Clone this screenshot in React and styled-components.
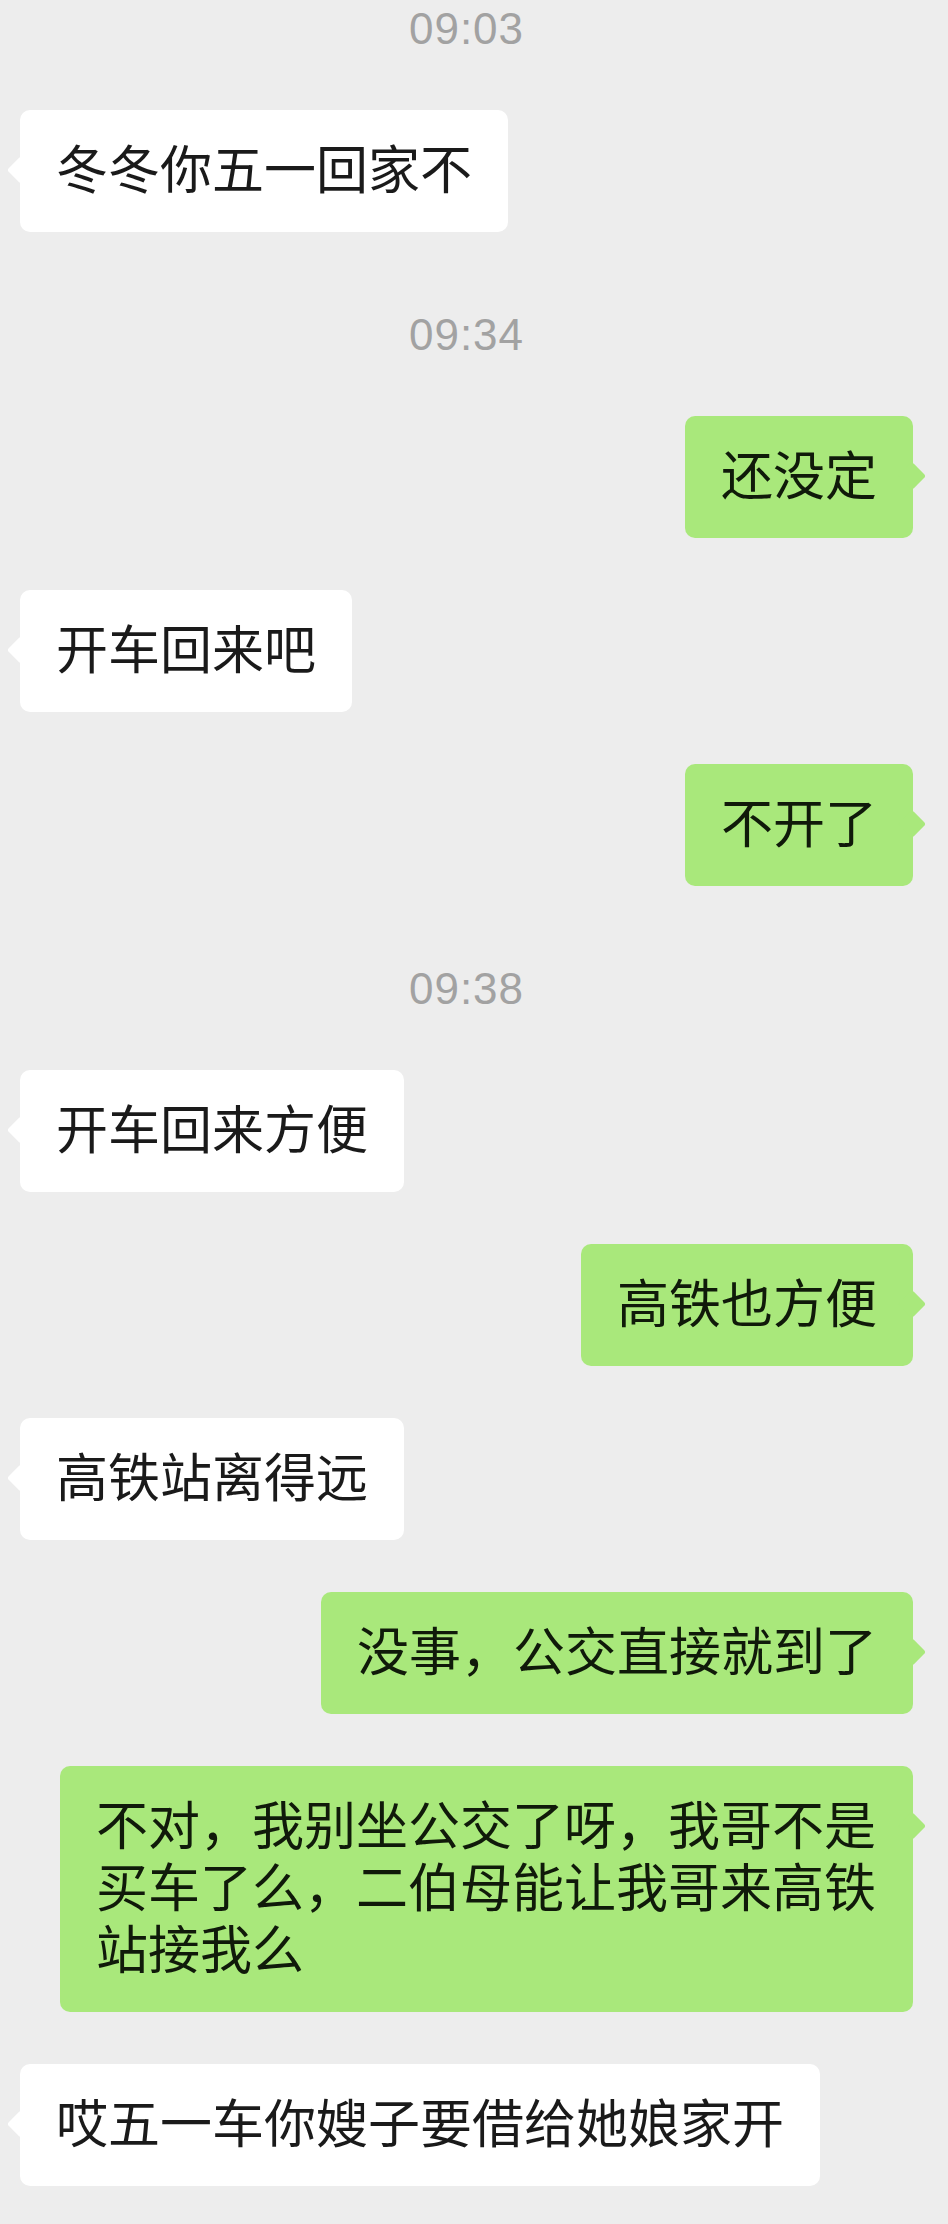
import React from "react";
import styled, { createGlobalStyle, css } from "styled-components";

const GlobalStyle = createGlobalStyle`
  html, body {
    margin: 0;
    padding: 0;
    background: #ededed;
  }
  body {
    font-family: "Noto Sans CJK SC", "Noto Sans", sans-serif;
  }
`;

const Page = styled.div`
  width: 948px;
  min-height: 2224px;
  box-sizing: border-box;
  background: #ededed;
  padding: 7px 35px 0 20px;
  display: flex;
  flex-direction: column;
  gap: 52px;
`;

const Time = styled.div`
  align-self: center;
  margin: 29px 0 7px 0;
  height: 44px;
  line-height: 44px;
  font-family: "Liberation Sans", Arial, sans-serif;
  font-size: 44px;
  letter-spacing: 1px;
  color: #a2a2a2;
  &:first-child {
    margin-top: 0;
  }
`;

const Row = styled.div`
  display: flex;
  justify-content: ${(p) => (p.$mine ? "flex-end" : "flex-start")};
`;

const Bubble = styled.div`
  position: relative;
  box-sizing: border-box;
  max-width: 853px;
  padding: 26px 36px 34px;
  border-radius: 10px;
  font-family: "Noto Sans CJK SC", "Noto Sans", sans-serif;
  font-size: 52px;
  line-height: 62px;
  word-break: break-all;
  ${(p) =>
    p.$mine
      ? css`
          background: #a9e87b;
          color: #101a0a;
        `
      : css`
          background: #ffffff;
          color: #1a1a1a;
        `}

  &::before {
    content: "";
    position: absolute;
    top: 50px;
    width: 20px;
    height: 20px;
    background: inherit;
    border-radius: 3px;
    transform: rotate(45deg);
    ${(p) =>
      p.$mine
        ? css`
            right: -9px;
          `
        : css`
            left: -9px;
          `}
  }
`;

const items = [
  { t: "09:03" },
  { m: false, text: "冬冬你五一回家不" },
  { t: "09:34" },
  { m: true, text: "还没定" },
  { m: false, text: "开车回来吧" },
  { m: true, text: "不开了" },
  { t: "09:38" },
  { m: false, text: "开车回来方便" },
  { m: true, text: "高铁也方便" },
  { m: false, text: "高铁站离得远" },
  { m: true, text: "没事，公交直接就到了" },
  {
    m: true,
    text: "不对，我别坐公交了呀，我哥不是买车了么，二伯母能让我哥来高铁站接我么",
  },
  { m: false, text: "哎五一车你嫂子要借给她娘家开" },
];

export default function App() {
  return (
    <>
      <GlobalStyle />
      <Page>
        {items.map((it, i) =>
          it.t ? (
            <Time key={i}>{it.t}</Time>
          ) : (
            <Row key={i} $mine={it.m}>
              <Bubble $mine={it.m}>{it.text}</Bubble>
            </Row>
          )
        )}
      </Page>
    </>
  );
}
